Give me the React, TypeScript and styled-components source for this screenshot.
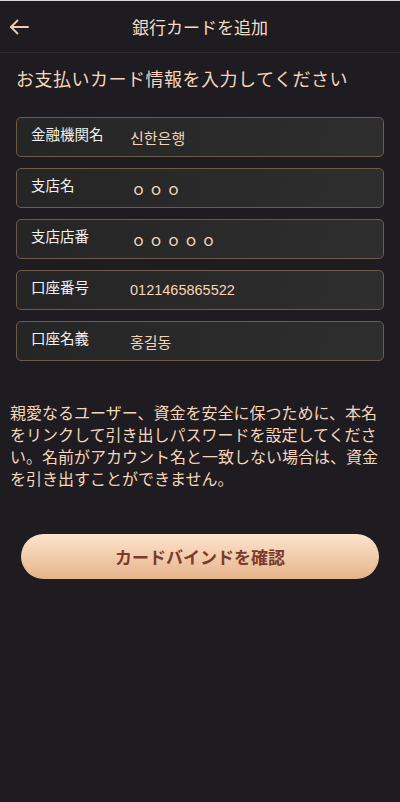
import React from "react";
import styled, { createGlobalStyle } from "styled-components";

const Global = createGlobalStyle`
  html, body { margin: 0; padding: 0; background: #1e1c20; }
  body { font-family: "Noto Sans CJK JP", "Noto Sans", sans-serif; }
  * { box-sizing: border-box; }
`;

const Page = styled.div`
  width: 400px;
  min-height: 802px;
  background: #1e1c20;
  border-top: 1px solid #d8d8d8;
  display: flex;
  flex-direction: column;
`;

const Header = styled.header`
  height: 52px;
  display: flex;
  align-items: center;
  justify-content: center;
  position: relative;
  border-bottom: 1px solid #2f2a27;
`;

const BackButton = styled.button`
  position: absolute;
  left: 8px;
  top: 50%;
  transform: translateY(-50%);
  background: none;
  border: none;
  padding: 0;
  display: flex;
  color: #f0cdb0;
`;

const HeaderTitle = styled.h1`
  margin: 0;
  font-size: 17px;
  font-weight: 400;
  color: #f1dcc8;
`;

const Content = styled.main`
  display: flex;
  flex-direction: column;
  padding: 0 16px;
`;

const Title = styled.h2`
  margin: 12px 0 0;
  font-size: 18px;
  letter-spacing: 0.5px;
  font-weight: 400;
  line-height: 26px;
  color: #f5d6bb;
`;

const Fields = styled.div`
  display: flex;
  flex-direction: column;
  gap: 11px;
  margin-top: 26px;
`;

const Field = styled.div`
  height: 40px;
  border: 1px solid #6e5c4b;
  border-radius: 5px;
  background: linear-gradient(100deg, #252525 0%, #2e2e2e 100%);
  display: flex;
  align-items: center;
  padding: 0 14px;
`;

const Label = styled.span`
  width: 99px;
  flex: none;
  font-size: 14.5px;
  color: #f2f2f2;
  transform: translateY(-4px);
`;

const Value = styled.span<{ $lang?: string }>`
  font-size: ${(p) => (p.$lang === "num" ? "14.5px" : "15px")};
  color: #f5d5b8;
  font-family: ${(p) =>
    p.$lang === "ko"
      ? `"Noto Sans CJK KR", sans-serif`
      : p.$lang === "num"
      ? `"Liberation Sans", Arial, sans-serif`
      : `"Noto Sans CJK JP", sans-serif`};
  letter-spacing: ${(p) => (p.$lang === "circle" ? "2.5px" : "0")};
  padding-left: ${(p) => (p.$lang === "circle" ? "1px" : "0")};
`;

const Notice = styled.p`
  margin: 40px -6px 0;
  font-size: 16px;
  line-height: 22px;
  color: #f5d6bb;
`;

const SubmitButton = styled.button`
  margin: 45px 5px 0;
  height: 45px;
  border: none;
  border-radius: 23px;
  background: linear-gradient(180deg, #fde4cc 0%, #e6b38b 100%);
  color: #7b3b2c;
  font-family: "Noto Sans CJK JP", sans-serif;
  font-size: 17px;
  font-weight: 700;
`;

const fields: { label: string; value: string; lang: string }[] = [
  { label: "金融機関名", value: "신한은행", lang: "ko" },
  { label: "支店名", value: "ｏｏｏ", lang: "circle" },
  { label: "支店店番", value: "ｏｏｏｏｏ", lang: "circle" },
  { label: "口座番号", value: "0121465865522", lang: "num" },
  { label: "口座名義", value: "홍길동", lang: "ko" },
];

export default function App() {
  return (
    <Page>
      <Global />
      <Header>
        <BackButton aria-label="back">
          <svg width="22" height="22" viewBox="0 0 22 22" fill="none" stroke="currentColor" strokeWidth="1.8" strokeLinecap="round" strokeLinejoin="round">
            <path d="M20 11H3" />
            <path d="M9.5 4.5L3 11l6.5 6.5" />
          </svg>
        </BackButton>
        <HeaderTitle>銀行カードを追加</HeaderTitle>
      </Header>
      <Content>
        <Title>お支払いカード情報を入力してください</Title>
        <Fields>
          {fields.map((f) => (
            <Field key={f.label}>
              <Label>{f.label}</Label>
              <Value $lang={f.lang}>{f.value}</Value>
            </Field>
          ))}
        </Fields>
        <Notice>
          親愛なるユーザー、資金を安全に保つために、本名をリンクして引き出しパスワードを設定してください。名前がアカウント名と一致しない場合は、資金を引き出すことができません。
        </Notice>
        <SubmitButton>カードバインドを確認</SubmitButton>
      </Content>
    </Page>
  );
}
